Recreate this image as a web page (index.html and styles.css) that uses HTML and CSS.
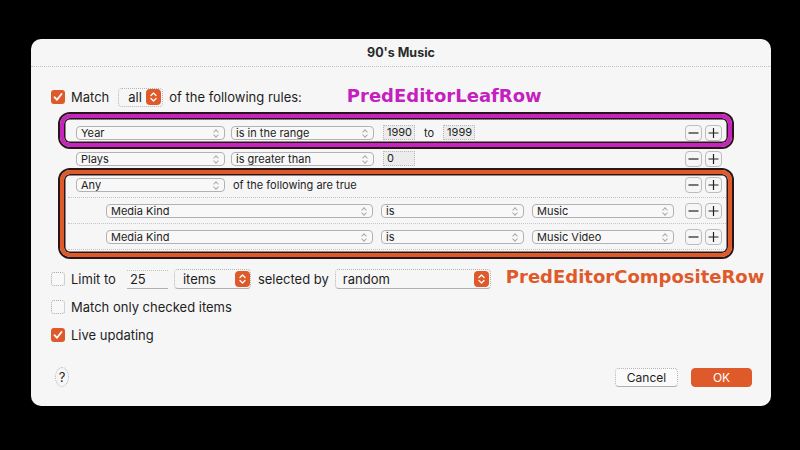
FILE: index.html
```html
<!DOCTYPE html>
<html>
<head>
<meta charset="utf-8">
<link rel="stylesheet" href="styles.css">
</head>
<body>
<div class="window">
  <div class="titlebar">90's Music</div>
  <div class="content">
    <div class="match-row">
      <span class="cb on"><svg viewBox="0 0 14 14" width="14" height="14"><path d="M3.5 7.2 L6 9.8 L10.5 4" fill="none" stroke="#fff" stroke-width="1.8" stroke-linecap="round" stroke-linejoin="round"/></svg></span>
      <span class="lbl">Match</span>
      <span class="opopup all"><span class="otext">all</span><span class="ostep"><svg viewBox="0 0 15 16" width="15" height="16"><path d="M5 6.5 L7.5 4 L10 6.5 M5 9.5 L7.5 12 L10 9.5" fill="none" stroke="#fff" stroke-width="1.3" stroke-linecap="round" stroke-linejoin="round"/></svg></span></span>
      <span class="lbl">of the following rules:</span>
      <span class="tag leaf">PredEditorLeafRow</span>
    </div>

    <div class="rules">
      <div class="row">
        <span class="pop w149">Year<i class="st"></i></span>
        <span class="pop w143">is in the range<i class="st"></i></span>
        <span class="field first">1990</span>
        <span class="to">to</span>
        <span class="field">1999</span>
        <span class="spacer"></span>
        <span class="pm"><svg viewBox="0 0 15 14" width="15" height="14"><path d="M2.5 7 H12.5" stroke="#222" stroke-width="1.2"/></svg></span><span class="pm"><svg viewBox="0 0 15 14" width="15" height="14"><path d="M2.5 7 H12.5 M7.5 2 V12" stroke="#222" stroke-width="1.2"/></svg></span>
      </div>
      <div class="row">
        <span class="pop w149">Plays<i class="st"></i></span>
        <span class="pop w143">is greater than<i class="st"></i></span>
        <span class="field first">0</span>
        <span class="spacer"></span>
        <span class="pm"><svg viewBox="0 0 15 14" width="15" height="14"><path d="M2.5 7 H12.5" stroke="#222" stroke-width="1.2"/></svg></span><span class="pm"><svg viewBox="0 0 15 14" width="15" height="14"><path d="M2.5 7 H12.5 M7.5 2 V12" stroke="#222" stroke-width="1.2"/></svg></span>
      </div>
      <div class="row">
        <span class="pop w149">Any<i class="st"></i></span>
        <span class="rtext">of the following are true</span>
        <span class="spacer"></span>
        <span class="pm"><svg viewBox="0 0 15 14" width="15" height="14"><path d="M2.5 7 H12.5" stroke="#222" stroke-width="1.2"/></svg></span><span class="pm"><svg viewBox="0 0 15 14" width="15" height="14"><path d="M2.5 7 H12.5 M7.5 2 V12" stroke="#222" stroke-width="1.2"/></svg></span>
      </div>
      <div class="row sub">
        <span class="pop w267">Media Kind<i class="st"></i></span>
        <span class="pop w143 g8">is<i class="st"></i></span>
        <span class="pop w142 g8">Music<i class="st"></i></span>
        <span class="spacer"></span>
        <span class="pm"><svg viewBox="0 0 15 14" width="15" height="14"><path d="M2.5 7 H12.5" stroke="#222" stroke-width="1.2"/></svg></span><span class="pm"><svg viewBox="0 0 15 14" width="15" height="14"><path d="M2.5 7 H12.5 M7.5 2 V12" stroke="#222" stroke-width="1.2"/></svg></span>
      </div>
      <div class="row sub">
        <span class="pop w267">Media Kind<i class="st"></i></span>
        <span class="pop w143 g8">is<i class="st"></i></span>
        <span class="pop w142 g8">Music Video<i class="st"></i></span>
        <span class="spacer"></span>
        <span class="pm"><svg viewBox="0 0 15 14" width="15" height="14"><path d="M2.5 7 H12.5" stroke="#222" stroke-width="1.2"/></svg></span><span class="pm"><svg viewBox="0 0 15 14" width="15" height="14"><path d="M2.5 7 H12.5 M7.5 2 V12" stroke="#222" stroke-width="1.2"/></svg></span>
      </div>
      <div class="hl purple"></div>
      <div class="hl orange"></div>
    </div>

    <div class="limit-row">
      <span class="cb off"></span>
      <span class="lbl">Limit to</span>
      <span class="num">25</span>
      <span class="opopup items"><span class="otext">items</span><span class="ostep"><svg viewBox="0 0 15 16" width="15" height="16"><path d="M5 6.5 L7.5 4 L10 6.5 M5 9.5 L7.5 12 L10 9.5" fill="none" stroke="#fff" stroke-width="1.3" stroke-linecap="round" stroke-linejoin="round"/></svg></span></span>
      <span class="lbl sel">selected by</span>
      <span class="opopup random"><span class="otext">random</span><span class="ostep"><svg viewBox="0 0 15 16" width="15" height="16"><path d="M5 6.5 L7.5 4 L10 6.5 M5 9.5 L7.5 12 L10 9.5" fill="none" stroke="#fff" stroke-width="1.3" stroke-linecap="round" stroke-linejoin="round"/></svg></span></span>
      <span class="tag comp">PredEditorCompositeRow</span>
    </div>

    <div class="opt-row r1">
      <span class="cb off"></span>
      <span class="lbl">Match only checked items</span>
    </div>
    <div class="opt-row r2">
      <span class="cb on"><svg viewBox="0 0 14 14" width="14" height="14"><path d="M3.5 7.2 L6 9.8 L10.5 4" fill="none" stroke="#fff" stroke-width="1.8" stroke-linecap="round" stroke-linejoin="round"/></svg></span>
      <span class="lbl">Live updating</span>
    </div>

    <div class="button-row">
      <span class="help">?</span>
      <span class="spacer"></span>
      <span class="btn cancel">Cancel</span>
      <span class="btn ok">OK</span>
    </div>
  </div>
</div>
</body>
</html>
```

FILE: styles.css
```css
html, body {
  margin: 0;
  padding: 0;
  background: #000;
  width: 800px;
  height: 450px;
  overflow: hidden;
  font-family: Inter, "Liberation Sans", sans-serif;
  color: #1e1e1e;
}
.window {
  margin: 39px 0 0 31px;
  width: 740px;
  height: 367px;
  background: #f6f6f6;
  border-radius: 10px;
  box-sizing: border-box;
}
.titlebar {
  height: 28px;
  border-bottom: 1px dotted #c4c4c4;
  box-sizing: border-box;
  text-align: center;
  font-size: 12.5px;
  font-weight: 700;
  line-height: 27px;
  color: #2a2a2a;
}
.content {
  padding: 0 20px;
  display: flex;
  flex-direction: column;
}
.content > div > * { flex-shrink: 0; }
.lbl {
  font-size: 13px;
  line-height: 16px;
  white-space: nowrap;
}
.cb {
  width: 14px;
  height: 14px;
  border-radius: 3px;
  box-sizing: border-box;
  flex: none;
  display: block;
}
.cb svg { display: block; }
.cb.on { background: #df5a2a; }
.cb.off { border: 1px dotted #a8a8a8; background: #f8f8f8; }

.match-row {
  margin-top: 22px;
  height: 16px;
  display: flex;
  align-items: center;
}
.match-row .cb { margin-right: 6px; }
.opopup {
  display: flex;
  align-items: center;
  box-sizing: border-box;
  border: 1px dotted #b4b4b4;
  border-radius: 4px;
  font-size: 13px;
}
.opopup .otext { flex: 1; }
.ostep {
  width: 15px;
  height: 16px;
  border-radius: 4px;
  background: #df5a2a;
  display: block;
  flex: none;
}
.ostep svg { display: block; }
.opopup.all {
  margin-left: 9px;
  width: 45px;
  height: 19px;
  padding: 0 1px 0 9px;
  margin-right: 6px;
}
.tag {
  font-family: "DejaVu Sans", Verdana, sans-serif;
  font-weight: 700;
  font-size: 18px;
  white-space: nowrap;
}
.tag.leaf {
  color: #c51fbf;
  margin-left: 45px;
  margin-top: -4px;
}

.rules {
  position: relative;
  margin: 14px 0 0 17px;
  width: 662px;
  border-bottom: 1px dotted #c4c4c4;
}
.row {
  height: 26px;
  box-sizing: border-box;
  border-top: 1px dotted #c4c4c4;
  display: flex;
  align-items: center;
  padding: 0 8px 0 8px;
  font-size: 11px;
}
.row > * { flex-shrink: 0; }
.row .spacer { flex: 1 1 auto; }
.row.sub { padding-left: 38px; }
.pop {
  position: relative;
  height: 14px;
  box-sizing: border-box;
  border: 1px solid #b2b2b2;
  border-radius: 4px;
  background: #f8f8f8;
  font-size: 11px;
  line-height: 12px;
  padding-left: 4px;
  margin-right: 6px;
  color: #222;
  white-space: nowrap;
}
.pop.g8 { margin-left: 2px; }
.w149 { width: 149px; }
.w143 { width: 143px; }
.w142 { width: 142px; }
.w267 { width: 267px; }
.st {
  position: absolute;
  right: 5px;
  top: 2px;
  width: 6px;
  height: 8px;
}
.st::before, .st::after {
  content: "";
  position: absolute;
  left: 1px;
  width: 3px;
  height: 3px;
  border-left: 1px solid #aaa;
  border-top: 1px solid #aaa;
  transform: rotate(45deg);
}
.st::before { top: 1px; }
.st::after { top: 4px; transform: rotate(225deg); }
.field {
  height: 15px;
  width: 32px;
  box-sizing: border-box;
  border: 1px dotted #b8b8b8;
  background: #ececec;
  font-size: 11px;
  line-height: 13px;
  padding-left: 3px;
}
.field.first { margin-left: 3px; }
.to { margin: 0 9px 0 9px; font-size: 11px; }
.rtext { font-size: 11px; margin-left: 2px; }
.spacer { flex: 1; }
.pm {
  width: 17px;
  height: 16px;
  box-sizing: border-box;
  border: 1px solid #bcbcbc;
  border-radius: 4px;
  margin-left: 3px;
  display: block;
}
.pm svg { display: block; }
.hl {
  position: absolute;
  box-sizing: border-box;
  border-radius: 10px;
  box-shadow: 0 0 0 2px #2a1518, inset 0 0 0 1.5px #2a1518;
  pointer-events: none;
}
.hl.purple {
  left: -8px;
  top: -5px;
  width: 672px;
  height: 33px;
  border: 4px solid #c624be;
}
.hl.orange {
  left: -8px;
  top: 51px;
  width: 672px;
  height: 87px;
  border: 4px solid #df5a2a;
}

.limit-row {
  margin-top: 19px;
  height: 20px;
  display: flex;
  align-items: center;
}
.limit-row .cb { margin-right: 6px; }
.num {
  margin-left: 11px;
  width: 41px;
  height: 19px;
  box-sizing: border-box;
  border-top: 1px dotted #c0c0c0;
  border-bottom: 1px solid #b0b0b0;
  font-size: 13px;
  line-height: 17px;
  padding-left: 3px;
}
.opopup.items {
  margin-left: 6px;
  width: 77px;
  height: 20px;
  padding: 0 0 0 8px;
  border-bottom: 1px solid #b0b0b0;
}
.lbl.sel { margin-left: 7px; }
.opopup.random {
  margin-left: 6px;
  width: 156px;
  height: 20px;
  padding: 0 1px 0 7px;
  border-bottom: 1px solid #b0b0b0;
}
.tag.comp {
  color: #df5a2a;
  margin-left: 15px;
  margin-top: -6px;
}
.opt-row {
  height: 16px;
  display: flex;
  align-items: center;
}
.opt-row .cb { margin-right: 6px; }
.opt-row.r1 { margin-top: 10px; }
.opt-row.r2 { margin-top: 12px; }

.button-row {
  margin-top: 24px;
  height: 20px;
  display: flex;
  align-items: center;
}
.button-row .spacer { flex: 1 1 auto; }
.help {
  margin-left: 4px;
  width: 14px;
  height: 20px;
  box-sizing: border-box;
  border: 1px dotted #b0b0b0;
  border-radius: 50%;
  text-align: center;
  font-size: 13px;
  line-height: 18px;
}
.btn {
  height: 19px;
  box-sizing: border-box;
  border-radius: 4px;
  text-align: center;
  font-size: 12px;
  line-height: 17px;
}
.btn.cancel {
  width: 63px;
  border: 1px dotted #b4b4b4;
  border-bottom: 1px solid #b0b0b0;
  background: #fafafa;
  margin-right: 13px;
}
.btn.ok {
  width: 61px;
  background: #df5a2a;
  color: #fff;
  margin-right: -1px;
  border: 1px solid #df5a2a;
}
```
